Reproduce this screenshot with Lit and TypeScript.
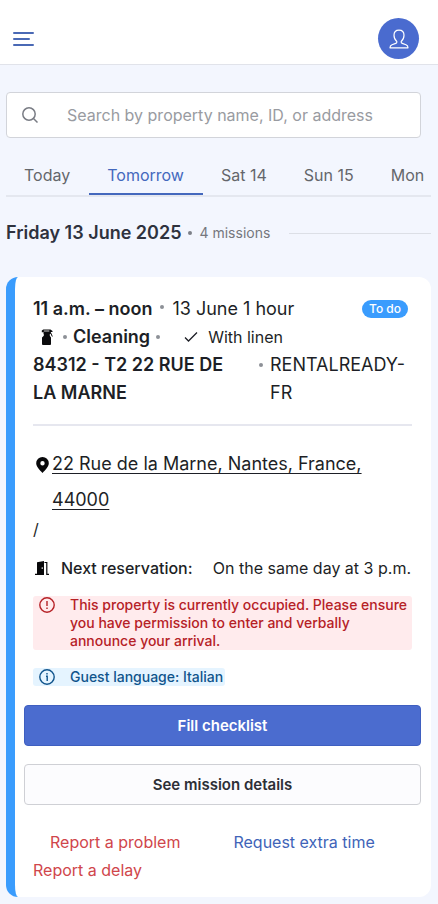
import { LitElement, html, css } from "lit";
import { customElement, state } from "lit/decorators.js";
import { classMap } from "lit/directives/class-map.js";

const font = css`"Inter", "Liberation Sans", sans-serif`;

@customElement("mission-card")
class MissionCard extends LitElement {
  static styles = css`
    :host {
      display: block;
      background: #fff;
      border-left: 9px solid #3a9cfd;
      border-radius: 12px;
      padding: 18px 10px 13px 9px;
      color: #1d1f26;
      font: 400 18px/28px ${font};
    }
    .body { padding: 0 9px; }
    .row { display: flex; align-items: center; }
    .strong { font-weight: 600; }
    .dot { flex: none; width: 4px; height: 4px; border-radius: 50%; background: #8d9097; }
    .when { gap: 8px; white-space: nowrap; }
    .raised { margin-bottom: 4px; }
    .badge {
      margin-left: auto;
      margin-right: 4px;
      padding: 0 7px;
      border-radius: 9px;
      background: #3a9cfd;
      color: #fff;
      font-size: 12px;
      font-weight: 500;
      line-height: 18px;
    }
    .kind { gap: 6px; padding-left: 8px; }
    .spray { width: 12px; height: 16px; margin-right: 4px; }
    .check { width: 14px; height: 12px; margin: 0 4px 0 18px; }
    .linen { font-size: 16px; }
    .place { align-items: flex-start; justify-content: space-between; margin: 0; }
    .place .strong { flex: 0 1 210px; }
    .owner { display: flex; gap: 7px; flex: 0 0 153px; }
    .owner .dot { margin-top: 12px; }
    .rule { height: 2px; border: 0; margin: 17px 0 20px; background: #e6e7ef; }
    .address { align-items: flex-start; line-height: 36px; }
    .pin { flex: none; width: 13px; height: 16px; margin: 11px 3px 0; }
    .address a { color: inherit; text-decoration-thickness: 1px; text-underline-offset: 3px; }
    .slash { font-size: 16px; line-height: 22px; }
    .next { font-size: 16px; margin-top: 14px; padding-right: 1px; white-space: nowrap; justify-content: space-between; }
    .next .label { display: flex; align-items: center; gap: 12px; font-weight: 500; }
    .door { width: 14px; height: 14px; margin-left: 2px; }
    .note {
      display: flex;
      width: fit-content;
      box-sizing: border-box;
      gap: 15px;
      margin: 0 0 18px;
      padding: 0 2px 0 6px;
      border-radius: 3px;
      font-size: 14px;
      font-weight: 500;
      line-height: 18px;
    }
    .note svg { flex: none; width: 16px; height: 16px; margin-top: 1px; }
    .danger { margin-top: 14px; background: #ffebed; color: #b62126; }
    .info { background: #e5f4ff; color: #10548c; }
    button { font: inherit; cursor: pointer; }
    .action {
      display: block;
      width: 100%;
      height: 41px;
      padding: 0;
      margin-bottom: 18px;
      border-radius: 4px;
      font-size: 15px;
      font-weight: 600;
    }
    .primary { margin-top: 19px; border: 1px solid #3f5fc0; background: #4b6ccf; color: #fff; }
    .secondary { border: 1px solid #cfd0d5; background: #fcfcfe; color: #2d2f36; }
    .links { display: flex; flex-wrap: wrap; margin-top: 23px; }
    .link { border: 0; padding: 0; background: none; font-size: 16px; line-height: 28px; }
    .first { margin: 0 53px 0 17px; }
    .red { color: #d0464b; }
    .blue { color: #4064b8; }
  `;

  render() {
    return html`
      <div class="body">
        <div class="row when">
          <span class="strong">11 a.m. – noon</span>
          <span class="dot raised"></span>
          <span>13 June 1 hour</span>
          <span class="badge">To do</span>
        </div>
        <div class="row kind">
          <svg class="spray" viewBox="0 0 12 16" aria-hidden="true">
            <path d="M.8 1.600 2.300.5H9.500l2 1.500V3H9.800v2H2.600V3.200H.8z" fill="#0b0b0d" />
            <path d="M2.800 2h5.500" stroke="#fff" stroke-width=".8" />
            <path d="M9.500 3.500l1.800 4" fill="none" stroke="#0b0b0d" />
            <path d="M2.800 4.600h6v2.200L10 8.600V15q0 .9-.9.900H1.900Q1 15.900 1 15V8.600L2.800 6.800z" fill="#0b0b0d" />
          </svg>
          <span class="dot"></span>
          <span class="strong">Cleaning</span>
          <span class="dot"></span>
          <svg class="check" viewBox="0 0 14 12" aria-hidden="true">
            <path d="m1 6.500 3.500 3.500L13 1.500" fill="none" stroke="#1d1f26" stroke-width="1.300" />
          </svg>
          <span class="linen">With linen</span>
        </div>
        <div class="row place">
          <span class="strong">84312 - T2 22 RUE DE LA MARNE</span>
          <span class="owner"><span class="dot"></span><span>RENTALREADY-FR</span></span>
        </div>
        <hr class="rule" />
        <div class="row address">
          <svg class="pin" viewBox="0 0 13 16" aria-hidden="true">
            <path fill-rule="evenodd" fill="#08080a" d="M6.500 0A6.300 6.300 0 0 0 .2 6.300C.2 9.600 3.700 13.200 6.500 16c2.800-2.800 6.300-6.400 6.300-9.700A6.300 6.300 0 0 0 6.500 0zm0 4a2.200 2.200 0 1 1 0 4.400 2.200 2.200 0 0 1 0-4.400z" />
          </svg>
          <a href="#map">22 Rue de la Marne, Nantes, France, 44000</a>
        </div>
        <div class="slash">/</div>
        <div class="row next">
          <span class="label">
            <svg class="door" viewBox="0 0 14 14" aria-hidden="true">
              <path fill-rule="evenodd" fill="#08080a" d="M2 1.200 9 0v14H0v-1.300h2zM6.700 6.300v1.600h1V6.300z" />
              <path d="M9.500 1.500h2.300v11.800H14" fill="none" stroke="#08080a" stroke-width="1.200" />
            </svg>
            Next reservation:
          </span>
          <span>On the same day at 3 p.m.</span>
        </div>
        <p class="note danger" role="alert">
          <svg viewBox="0 0 16 16" fill="none" stroke="currentColor" stroke-width="1.400" aria-hidden="true">
            <circle cx="8" cy="8" r="7.200" />
            <path d="M8 4v5M8 10.500V12" />
          </svg>
          <span>This property is currently occupied. Please ensure you have permission to enter and verbally announce your arrival.</span>
        </p>
        <p class="note info">
          <svg viewBox="0 0 16 16" fill="none" stroke="currentColor" stroke-width="1.400" aria-hidden="true">
            <circle cx="8" cy="8" r="7.200" />
            <path d="M8 4v1.500M7 7.200h1.200V12" />
          </svg>
          <span>Guest language: Italian</span>
        </p>
      </div>
      <button class="action primary">Fill checklist</button>
      <button class="action secondary">See mission details</button>
      <div class="body links">
        <button class="link red first">Report a problem</button>
        <button class="link blue">Request extra time</button>
        <button class="link red">Report a delay</button>
      </div>
    `;
  }
}

@customElement("app-root")
class AppRoot extends LitElement {
  static styles = css`
    :host {
      display: block;
      min-height: 100vh;
      background: #f3f6fe;
      color: #2e323e;
      font: 400 16px/24px ${font};
    }
    header {
      display: flex;
      align-items: center;
      justify-content: space-between;
      padding: 18px 19px 5px 13px;
      border-bottom: 1px solid #e1e3ea;
      background: #fff;
    }
    button { border: 0; padding: 0; background: none; font: inherit; cursor: pointer; }
    .menu { display: flex; }
    .menu svg { width: 21px; height: 14px; }
    .avatar {
      display: grid;
      place-items: center;
      width: 41px;
      height: 41px;
      border-radius: 50%;
      background: #4a6bcf;
    }
    .avatar svg { width: 20px; height: 20px; }
    main { padding: 27px 7px 8px 6px; }
    .search {
      display: flex;
      align-items: center;
      box-sizing: border-box;
      height: 46px;
      margin-right: 10px;
      border: 1px solid #d2d4da;
      border-radius: 4px;
      background: #fff;
    }
    .search svg { flex: none; width: 16px; height: 16px; margin: 0 29px 0 15px; }
    .search input {
      flex: 1;
      min-width: 0;
      border: 0;
      padding: 0;
      outline: 0;
      background: none;
      color: #2e323e;
      font: inherit;
    }
    .search input::placeholder { color: #999ba1; opacity: 1; }
    .tabs {
      display: flex;
      margin-top: 16px;
      overflow: hidden;
      border-bottom: 2px solid #e4e7ef;
    }
    .tab {
      flex: none;
      padding: 9px 19px 6px 18px;
      border-bottom: 2px solid transparent;
      color: #64666b;
      white-space: nowrap;
    }
    .tab.active { border-color: #4468bd; color: #4468bd; }
    .day { display: flex; align-items: center; gap: 7px; margin: 22px 0 30px; }
    h2 { margin: 0; font-size: 18px; font-weight: 600; line-height: 28px; }
    .dot { width: 4px; height: 4px; border-radius: 50%; background: #7d8088; }
    .count { color: #75777d; font-size: 14px; }
    .line { flex: 1; height: 1px; margin-left: 12px; background: #dcdfe6; }
  `;

  @state() private active = "Tomorrow";

  render() {
    const days = ["Today", "Tomorrow", "Sat 14", "Sun 15", "Mon"];
    return html`
      <header>
        <button class="menu" aria-label="Menu">
          <svg viewBox="0 0 21 14" fill="none" stroke="#4a69b5" stroke-width="2" stroke-linecap="round">
            <path d="M1 1h19M1 7h15M1 13h19" />
          </svg>
        </button>
        <button class="avatar" aria-label="Account">
          <svg viewBox="0 0 20 20" fill="none" stroke="#fff" stroke-width="1.200" stroke-linejoin="round">
            <path d="M7.800 12.500C6 11 5 8.700 5 6.300 5 3 7 1.200 10 1.200s5 1.800 5 5.100c0 2.400-1 4.700-2.800 6.200v.8c0 .6.400.9 1 1.100l3.800 1.300c1.300.5 2 1.400 2 3.100H1c0-1.700.7-2.600 2-3.100l3.800-1.300c.6-.2 1-.5 1-1.100z" />
          </svg>
        </button>
      </header>
      <main>
        <label class="search">
          <svg viewBox="0 0 16 16" fill="none" stroke="#797c84" stroke-width="1.500" aria-hidden="true">
            <circle cx="7" cy="7" r="6.200" />
            <path d="m11.500 11.500 4 4" />
          </svg>
          <input type="text" aria-label="Search" placeholder="Search by property name, ID, or address" />
        </label>
        <nav class="tabs" role="tablist">
          ${days.map(
            (d) => html`<button
              role="tab"
              class=${classMap({ tab: true, active: d === this.active })}
              aria-selected=${d === this.active}
              @click=${() => (this.active = d)}
            >${d}</button>`
          )}
        </nav>
        <div class="day">
          <h2>Friday 13 June 2025</h2>
          <span class="dot"></span>
          <span class="count">4 missions</span>
          <span class="line"></span>
        </div>
        <mission-card></mission-card>
      </main>
    `;
  }
}
